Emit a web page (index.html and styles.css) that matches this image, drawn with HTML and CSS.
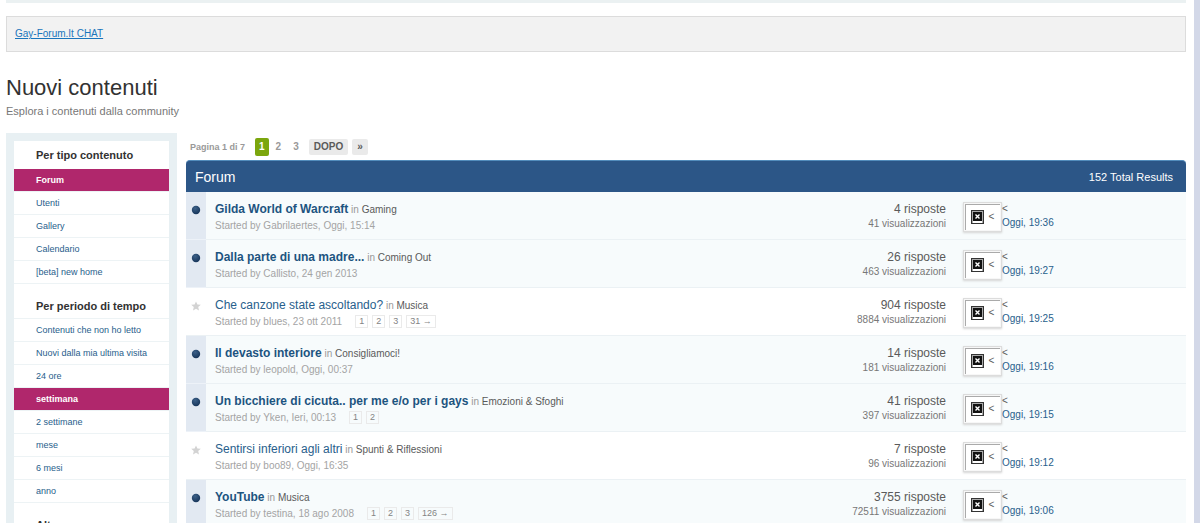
FILE: index.html
```
<!DOCTYPE html>
<html lang="it">
<head>
<meta charset="utf-8">
<title>Nuovi contenuti</title>
<link rel="stylesheet" href="styles.css">
</head>
<body>
<svg class="defs" width="0" height="0" aria-hidden="true">
  <defs>
    <radialGradient id="ball" cx="40%" cy="30%" r="70%"><stop offset="0" stop-color="#3c6088"/><stop offset="1" stop-color="#17365b"/></radialGradient>
    <symbol id="unread" viewBox="0 0 10 10"><circle cx="5" cy="5" r="4.2" fill="url(#ball)"/></symbol>
    <symbol id="star" viewBox="0 0 10 10"><path d="M5 .4 6.4 3.5 9.8 3.8 7.2 6.1 8 9.5 5 7.7 2 9.5 2.8 6.1.2 3.8 3.6 3.5Z" fill="#d3d3d3"/></symbol>
    <symbol id="broken" viewBox="0 0 13 14"><path d="M0 0h13v14H0z" fill="#333"/><path d="M1 1h11v12H1z" fill="#aaa"/><path d="M2 11h9v2H2z" fill="#fff"/><path d="M2 2h9v9H2z" fill="#111"/><path d="m4.500 4.500 4 4M8.500 4.500l-4 4" stroke="#fff" stroke-width="1.4"/></symbol>
  </defs>
</svg>
<div class="page">
  <div class="band"></div>
  <div class="notice"><a href="#">Gay-Forum.It CHAT</a></div>
  <h1>Nuovi contenuti</h1>
  <p class="desc">Esplora i contenuti dalla community</p>
  <div class="columns">
    <nav class="sidebar">
      <div class="menu">
        <h2>Per tipo contenuto</h2>
        <ul>
          <li><a class="active" href="#">Forum</a></li>
          <li><a href="#">Utenti</a></li>
          <li><a href="#">Gallery</a></li>
          <li><a href="#">Calendario</a></li>
          <li><a href="#">[beta] new home</a></li>
        </ul>
        <h2>Per periodo di tempo</h2>
        <ul>
          <li><a href="#">Contenuti che non ho letto</a></li>
          <li><a href="#">Nuovi dalla mia ultima visita</a></li>
          <li><a href="#">24 ore</a></li>
          <li><a class="active" href="#">settimana</a></li>
          <li><a href="#">2 settimane</a></li>
          <li><a href="#">mese</a></li>
          <li><a href="#">6 mesi</a></li>
          <li><a href="#">anno</a></li>
        </ul>
        <h2>Altro</h2>
      </div>
    </nav>
    <main class="main">
      <div class="pager">
        <span class="total">Pagina 1 di 7</span>
        <span class="current">1</span>
        <a href="#">2</a>
        <a href="#">3</a>
        <a class="step" href="#">DOPO</a>
        <a class="step last" href="#">»</a>
      </div>
      <div class="bar"><h2>Forum</h2><span>152 Total Results</span></div>
      <table class="topics">
        <colgroup><col class="c-icon"><col><col class="c-stats"><col class="c-last"></colgroup>
        <tbody>
        <tr class="unread">
          <td class="icon"><svg width="10" height="10"><use href="#unread"/></svg></td>
          <td class="topic"><div class="title"><a href="#">Gilda World of Warcraft</a> in <a class="forum" href="#">Gaming</a></div><div class="meta">Started by Gabrilaertes, Oggi, 15:14</div></td>
          <td class="stats"><div class="replies">4 risposte</div><div>41 visualizzazioni</div></td>
          <td><div class="latest"><a class="avatar" href="#"><svg width="13" height="14"><use href="#broken"/></svg>&lt;</a><div>&lt;<br><a href="#">Oggi, 19:36</a></div></div></td>
        </tr>
        <tr class="unread">
          <td class="icon"><svg width="10" height="10"><use href="#unread"/></svg></td>
          <td class="topic"><div class="title"><a href="#">Dalla parte di una madre...</a> in <a class="forum" href="#">Coming Out</a></div><div class="meta">Started by Callisto, 24 gen 2013</div></td>
          <td class="stats"><div class="replies">26 risposte</div><div>463 visualizzazioni</div></td>
          <td><div class="latest"><a class="avatar" href="#"><svg width="13" height="14"><use href="#broken"/></svg>&lt;</a><div>&lt;<br><a href="#">Oggi, 19:27</a></div></div></td>
        </tr>
        <tr>
          <td class="icon"><svg width="10" height="10"><use href="#star"/></svg></td>
          <td class="topic"><div class="title"><a href="#">Che canzone state ascoltando?</a> in <a class="forum" href="#">Musica</a></div><div class="meta">Started by blues, 23 ott 2011<span class="pages"><a href="#">1</a><a href="#">2</a><a href="#">3</a><a href="#">31 →</a></span></div></td>
          <td class="stats"><div class="replies">904 risposte</div><div>8884 visualizzazioni</div></td>
          <td><div class="latest"><a class="avatar" href="#"><svg width="13" height="14"><use href="#broken"/></svg>&lt;</a><div>&lt;<br><a href="#">Oggi, 19:25</a></div></div></td>
        </tr>
        <tr class="unread">
          <td class="icon"><svg width="10" height="10"><use href="#unread"/></svg></td>
          <td class="topic"><div class="title"><a href="#">Il devasto interiore</a> in <a class="forum" href="#">Consigliamoci!</a></div><div class="meta">Started by leopold, Oggi, 00:37</div></td>
          <td class="stats"><div class="replies">14 risposte</div><div>181 visualizzazioni</div></td>
          <td><div class="latest"><a class="avatar" href="#"><svg width="13" height="14"><use href="#broken"/></svg>&lt;</a><div>&lt;<br><a href="#">Oggi, 19:16</a></div></div></td>
        </tr>
        <tr class="unread">
          <td class="icon"><svg width="10" height="10"><use href="#unread"/></svg></td>
          <td class="topic"><div class="title"><a href="#">Un bicchiere di cicuta.. per me e/o per i gays</a> in <a class="forum" href="#">Emozioni &amp; Sfoghi</a></div><div class="meta">Started by Yken, Ieri, 00:13<span class="pages"><a href="#">1</a><a href="#">2</a></span></div></td>
          <td class="stats"><div class="replies">41 risposte</div><div>397 visualizzazioni</div></td>
          <td><div class="latest"><a class="avatar" href="#"><svg width="13" height="14"><use href="#broken"/></svg>&lt;</a><div>&lt;<br><a href="#">Oggi, 19:15</a></div></div></td>
        </tr>
        <tr>
          <td class="icon"><svg width="10" height="10"><use href="#star"/></svg></td>
          <td class="topic"><div class="title"><a href="#">Sentirsi inferiori agli altri</a> in <a class="forum" href="#">Spunti &amp; Riflessioni</a></div><div class="meta">Started by boo89, Oggi, 16:35</div></td>
          <td class="stats"><div class="replies">7 risposte</div><div>96 visualizzazioni</div></td>
          <td><div class="latest"><a class="avatar" href="#"><svg width="13" height="14"><use href="#broken"/></svg>&lt;</a><div>&lt;<br><a href="#">Oggi, 19:12</a></div></div></td>
        </tr>
        <tr class="unread">
          <td class="icon"><svg width="10" height="10"><use href="#unread"/></svg></td>
          <td class="topic"><div class="title"><a href="#">YouTube</a> in <a class="forum" href="#">Musica</a></div><div class="meta">Started by testina, 18 ago 2008<span class="pages"><a href="#">1</a><a href="#">2</a><a href="#">3</a><a href="#">126 →</a></span></div></td>
          <td class="stats"><div class="replies">3755 risposte</div><div>72511 visualizzazioni</div></td>
          <td><div class="latest"><a class="avatar" href="#"><svg width="13" height="14"><use href="#broken"/></svg>&lt;</a><div>&lt;<br><a href="#">Oggi, 19:06</a></div></div></td>
        </tr>
        </tbody>
      </table>
    </main>
  </div>
</div>
</body>
</html>
```
FILE: styles.css
```
* { box-sizing: border-box; }
body {
  margin: 0;
  height: 100vh;
  overflow: hidden;
  font: 11px/14px "Liberation Sans", Arial, sans-serif;
  color: #5a5a5a;
  background: #fff;
}
a { color: #28608c; text-decoration: none; }
h1, h2, p, ul { margin: 0; padding: 0; font-weight: normal; }
.defs { position: absolute; }
.page {
  min-height: 100vh;
  padding: 0 8px 0 6px;
  border-right: 6px solid #d3d8e8;
}
.band { height: 3px; background: #ebf1f2; }
.notice {
  margin-top: 13px;
  padding: 10px 8px;
  border: 1px solid #dcdcdc;
  background: #f2f2f2;
  font-size: 10px;
}
.notice a { color: #1a75bc; text-decoration: underline; }
h1 { margin-top: 23px; font-size: 22px; line-height: 26px; color: #323232; }
.desc { margin-top: 2px; font-size: 11px; line-height: 16px; color: #777; }
.columns { display: flex; gap: 9px; margin-top: 14px; }
.sidebar { flex: 0 0 171px; padding: 8px; background: #e8f0f3; }
.menu { min-height: 600px; background: #fff; }
.menu h2 {
  padding: 6px 22px;
  font-size: 11px;
  line-height: 16px;
  font-weight: bold;
  color: #323232;
  white-space: nowrap;
}
.menu ul { list-style: none; }
.menu ul + h2 { padding-top: 14px; padding-bottom: 4px; border-bottom: 1px solid #edf3f5; }
.menu a {
  display: block;
  height: 23px;
  padding-left: 22px;
  border-bottom: 1px solid #edf3f5;
  font-size: 9px;
  line-height: 22px;
  white-space: nowrap;
}
.menu .active { background: #b0276c; background-clip: padding-box; color: #fff; font-weight: bold; }
.main { flex: 1; min-width: 0; }
.pager {
  display: flex;
  align-items: center;
  height: 27px;
  padding-left: 4px;
  font-size: 10px;
  font-weight: bold;
  color: #999;
}
.pager a { color: #999; padding: 0 6px; }
.pager .total { margin-right: 10px; font-size: 9px; }
.pager .current {
  margin-right: 1px;
  padding: 2px 4px;
  border-radius: 2px;
  background: #7ba60d;
  color: #fff;
}
.pager .step {
  margin-left: 4px;
  padding: 1px 5px;
  border-radius: 2px;
  background: #eaeaea;
  color: #5a5a5a;
}
.bar {
  display: flex;
  justify-content: space-between;
  align-items: center;
  height: 32px;
  padding: 0 13px 0 9px;
  border-top: 1px solid #528cbc;
  border-radius: 4px 4px 0 0;
  background: #2c5687;
  color: #fff;
}
.bar h2 { font-size: 14px; line-height: 18px; }
.topics { width: 100%; table-layout: fixed; border-spacing: 0; }
.c-icon { width: 20px; }
.c-stats { width: 180px; }
.c-last { width: 240px; }
.topics td {
  height: 48px;
  padding: 9px 0 0;
  border-bottom: 1px solid #ebf1f4;
  vertical-align: top;
}
.unread td { background: #f7fbfc; }
.topics .icon { padding-top: 13px; }
.unread .icon { background: #e2e9f2; border-bottom-color: #edf2f8; }
.icon svg { display: block; margin: 0 auto; }
.topics .topic { padding: 8px 0 0 9px; }
.title { line-height: 18px; color: #999; font-size: 10px; }
.title a { font-size: 12px; }
.unread .title a { font-weight: bold; color: #1d5480; }
.title .forum, .unread .title .forum { font-size: 10px; font-weight: normal; color: #5a5a5a; }
.meta { display: flex; font-size: 10px; line-height: 13px; color: #a4a4a4; }
.pages { display: flex; gap: 4px; margin-left: 13px; }
.pages a { padding: 0 3px; border: 1px solid #eaeaea; font-size: 9px; line-height: 11px; color: #848484; }
.stats { text-align: right; font-size: 10px; color: #777; }
.stats .replies { font-size: 12px; line-height: 16px; color: #5a5a5a; }
.latest { display: flex; padding-left: 17px; margin-top: 1px; font-size: 10px; }
.avatar {
  display: flex;
  align-items: center;
  justify-content: center;
  gap: 5px;
  width: 39px;
  height: 30px;
  border: 1px solid #dcdcdc;
  background: #fff;
  box-shadow: inset 0 0 0 1px #f7f7f7, inset 2px 2px 0 #aaa, 0 1px 2px #d5d5d5;
  color: #5a5a5a;
}
```
